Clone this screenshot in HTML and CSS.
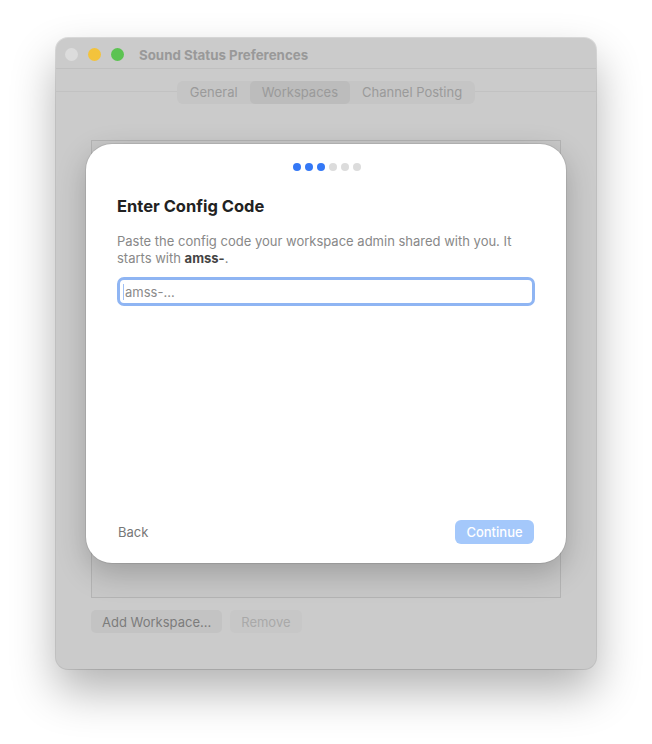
FILE: index.html
```html
<!DOCTYPE html>
<html lang="en">

<head>
  <meta charset="UTF-8" />
  <meta name="viewport" content="width=device-width, initial-scale=1.0" />
  <title>Sound Status Preferences</title>
  <link rel="stylesheet" href="styles.css">
</head>

<body>
  <div class="window">
    <div class="titlebar">
      <span class="light close"></span>
      <span class="light min"></span>
      <span class="light max"></span>
      <span class="title">Sound Status Preferences</span>
    </div>

    <div class="toolbar">
      <div class="tabs">
        <span class="tab">General</span>
        <span class="tab active">Workspaces</span>
        <span class="tab">Channel Posting</span>
      </div>
    </div>

    <div class="list"></div>

    <div class="actions">
      <span class="btn">Add Workspace...</span>
      <span class="btn disabled">Remove</span>
    </div>

    <!-- sheet over the window -->
    <div class="sheet">
      <ol class="steps">
        <li class="done"></li>
        <li class="done"></li>
        <li class="done"></li>
        <li></li>
        <li></li>
        <li></li>
      </ol>
      <h1>Enter Config Code</h1>
      <p>Paste the config code your workspace admin shared with you. It starts with <b>amss-</b>.</p>
      <div class="field">
        <span class="caret"></span>
        <span class="placeholder">amss-...</span>
      </div>
      <div class="sheet-foot">
        <span class="back">Back</span>
        <span class="continue">Continue</span>
      </div>
    </div>
  </div>
</body>

</html>
```

FILE: styles.css
```css
* {
  margin: 0;
  padding: 0;
  box-sizing: border-box;
}

html,
body {
  min-height: 744px;
}

body {
  background: #fff;
  font-family: Inter, "Noto Sans", sans-serif;
  font-size: 13px;
  padding-top: 38px;
}

.window {
  position: relative;
  width: 540px;
  height: 631px;
  margin-left: 56px;
  background: #cbcbcb;
  border-radius: 12px;
  box-shadow: 0 0 0 1px rgba(0, 0, 0, 0.12), 0 22px 45px rgba(0, 0, 0, 0.3);
}

.titlebar {
  height: 31px;
  display: flex;
  align-items: center;
  padding: 3px 0 0 9px;
  border-bottom: 1px solid #c0c0c0;
}

.light {
  width: 13px;
  height: 13px;
  border-radius: 50%;
  margin-right: 10px;
}

.close {
  background: #dcdcdc;
}

.min {
  background: #f3c33c;
}

.max {
  background: #5cc352;
}

.title {
  margin-left: 5px;
  font-weight: 700;
  color: #999;
  font-size: 13.3px;
}

.toolbar {
  height: 46px;
  display: flex;
  justify-content: center;
  align-items: center;
  background: linear-gradient(#cbcbcb 22px, #c2c2c2 22px, #c2c2c2 23px, #cbcbcb 23px);
}

.tabs {
  display: flex;
  height: 23px;
  padding: 0 1px;
  background: #c5c5c5;
  border-radius: 6px;
}

.tab {
  display: flex;
  align-items: center;
  padding: 0 12px;
  color: #9a9a9a;
  font-size: 13px;
  border-radius: 5px;
}

.tab.active {
  background: #bcbcbc;
}

.list {
  width: 470px;
  height: 458px;
  margin: 25px 0 0 35px;
  background: #c8c8c8;
  border: 1px solid #b4b4b4;
}

.actions {
  display: flex;
  gap: 8px;
  margin: 12px 0 0 35px;
}

.btn {
  height: 23px;
  padding: 0 11px;
  display: flex;
  align-items: center;
  border-radius: 5px;
  background: #c3c3c3;
  color: #7c7c7c;
}

.btn.disabled {
  background: #c7c7c7;
  color: #a9a9a9;
}

.sheet {
  position: absolute;
  left: 30px;
  top: 106px;
  width: 480px;
  height: 419px;
  background: #fff;
  border-radius: 26px;
  box-shadow: 0 0 0 1px rgba(0, 0, 0, 0.08), 0 10px 30px rgba(0, 0, 0, 0.22);
  padding: 19px 31px 19px 31px;
  display: flex;
  flex-direction: column;
}

.steps {
  display: flex;
  justify-content: center;
  gap: 4px;
  list-style: none;
  margin-left: 1px;
}

.steps li {
  width: 8px;
  height: 8px;
  border-radius: 50%;
  background: #dcdcdc;
}

.steps li.done {
  background: #3478f6;
}

h1 {
  margin-top: 25px;
  font-size: 16.5px;
  font-weight: 700;
  color: #222;
  line-height: 20px;
}

p {
  margin-top: 17px;
  color: #888;
  font-size: 13px;
  line-height: 17px;
}

p b {
  color: #444;
  font-weight: 700;
}

.field {
  margin-top: 10px;
  height: 29px;
  border: 3px solid #8fb5f3;
  border-radius: 7px;
  display: flex;
  align-items: center;
  padding-left: 3px;
}

.caret {
  width: 1px;
  height: 16px;
  background: #9fc0f5;
}

.placeholder {
  margin-left: 1px;
  color: #8a8a8a;
  font-size: 13px;
}

.sheet-foot {
  margin-top: auto;
  display: flex;
  justify-content: space-between;
  align-items: center;
}

.back {
  margin-left: 1px;
  color: #777;
}

.continue {
  height: 24px;
  width: 79px;
  margin-right: 1px;
  display: flex;
  align-items: center;
  justify-content: center;
  border-radius: 6px;
  background: #a4c8fb;
  color: #fff;
  font-weight: 500;
}
```
